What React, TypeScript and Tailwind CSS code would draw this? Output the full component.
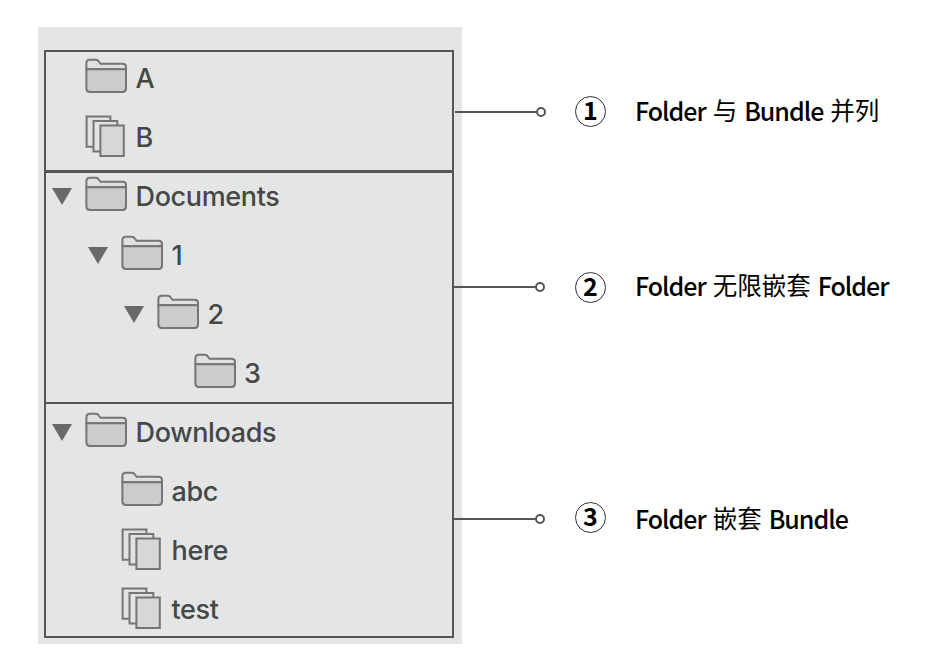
import React from "react";

function Arrow({ shown }: { shown?: boolean }) {
  return (
    <svg viewBox="0 0 20 47" className="h-[47px] w-5 shrink-0">
      {shown && <path d="M0 15H20L10 32Z" fill="#686a69" />}
    </svg>
  );
}

function FolderIcon() {
  return (
    <svg viewBox="0 0 44 47" className="h-[47px] w-11 shrink-0" fill="none" stroke="#747675" strokeWidth="2">
      <path d="M2.4 14.2V8.4Q2.4 4.8 5.7 4.8H11.9Q13.8 4.8 15 6.8L16.6 8.8H38.4Q42 8.8 42 12V14.2Z" fill="#dfe1df" />
      <path d="M2.4 14.2H42V33.6Q42 37 38.6 37H5.8Q2.4 37 2.4 33.6Z" fill="#cbcdcb" />
    </svg>
  );
}

function BundleIcon() {
  return (
    <svg viewBox="0 0 44 47" className="h-[47px] w-11 shrink-0" stroke="#747675" strokeWidth="2" fill="#e1e3e1">
      <path d="M2.6 2.5H26.4V32.8H2.6Z" />
      <path d="M9.5 7.1H33.3V37.5H9.5Z" />
      <path d="M16.4 11.6H39.8V42H16.4Z" fill="#d6d8d6" />
    </svg>
  );
}

type RowProps = { label: string; indent: string; open?: boolean; bundle?: boolean };

function Row({ label, indent, open, bundle }: RowProps) {
  return (
    <div className={`flex h-[47px] items-center ${indent}`}>
      <Arrow shown={open} />
      <div className="ml-3 flex items-center">
        {bundle ? <BundleIcon /> : <FolderIcon />}
        <span className="ml-[7.5px] text-[27px] leading-[47px] font-[450] tracking-[-0.35px] whitespace-nowrap text-[#464847]">
          {label}
        </span>
      </div>
    </div>
  );
}

type CalloutProps = { n: string; line: string; shift: string; drop: string; children: React.ReactNode };

function Callout({ n, line, shift, drop, children }: CalloutProps) {
  return (
    <div className="flex h-8 items-center">
      <div className={`h-[2px] bg-[#555] ${line}`} />
      <div className="size-[10px] rounded-full border-2 border-[#555] bg-white" />
      <div
        className={`flex size-[31px] shrink-0 items-center justify-center rounded-full border border-[#333] pb-[4px] font-['Noto_Sans_CJK_SC',sans-serif] text-[25px] leading-none font-bold ${shift}`}
      >
        {n}
      </div>
      <div
        className={`ml-[29px] flex items-center gap-[7px] font-['Noto_Sans_CJK_SC',sans-serif] text-[24.5px] leading-8 whitespace-nowrap ${drop}`}
      >
        {children}
      </div>
    </div>
  );
}

function Latin({ children }: { children: string }) {
  return <span className="text-[25px] font-medium tracking-[-1px]">{children}</span>;
}

export default function App() {
  return (
    <main className="flex h-[671px] w-[938px] items-start overflow-hidden bg-white pt-[27px] pl-[38px] text-black">
      <section className="h-[617px] w-[424px] shrink-0 bg-[#e4e6e5] px-[6px] pt-[23px] font-['Inter',sans-serif]">
        <div className="flex h-[588px] w-[410px] flex-col border-2 border-[#555]">
          <div className="flex h-[118px] flex-col gap-3 pt-[3px]">
            <Row label="A" indent="pl-[6px]" />
            <Row label="B" indent="pl-[6px]" bundle />
          </div>
          <div className="flex h-[232px] flex-col gap-3 border-t-3 border-[#555]">
            <Row label="Documents" indent="pl-[6px]" open />
            <Row label="1" indent="pl-[42px]" open />
            <Row label="2" indent="pl-[78px]" open />
            <Row label="3" indent="pl-[114.5px]" />
          </div>
          <div className="flex h-[234px] flex-col gap-3 border-t-2 border-[#555] pt-[5px]">
            <Row label="Downloads" indent="pl-[6px]" open />
            <Row label="abc" indent="pl-[42px]" />
            <Row label="here" indent="pl-[42px]" bundle />
            <Row label="test" indent="pl-[42px]" bundle />
          </div>
        </div>
      </section>
      <section className="z-10 -ml-[8px] flex flex-col pt-[69px]">
        <Callout n="1" line="ml-px w-[81px]" shift="ml-[29px] mb-[2px]" drop="mb-[4px]">
          <Latin>Folder</Latin>
          <span>与</span>
          <Latin>Bundle</Latin>
          <span>并列</span>
        </Callout>
        <div className="pt-[143px]">
          <Callout n="2" line="w-[81px]" shift="ml-[30px]" drop="mb-[4px]">
            <Latin>Folder</Latin>
            <span>无限嵌套</span>
            <Latin>Folder</Latin>
          </Callout>
        </div>
        <div className="pt-[200px]">
          <Callout n="3" line="w-[81px]" shift="ml-[30px] mb-[3px]" drop="mb-[2px]">
            <Latin>Folder</Latin>
            <span>嵌套</span>
            <Latin>Bundle</Latin>
          </Callout>
        </div>
      </section>
    </main>
  );
}
